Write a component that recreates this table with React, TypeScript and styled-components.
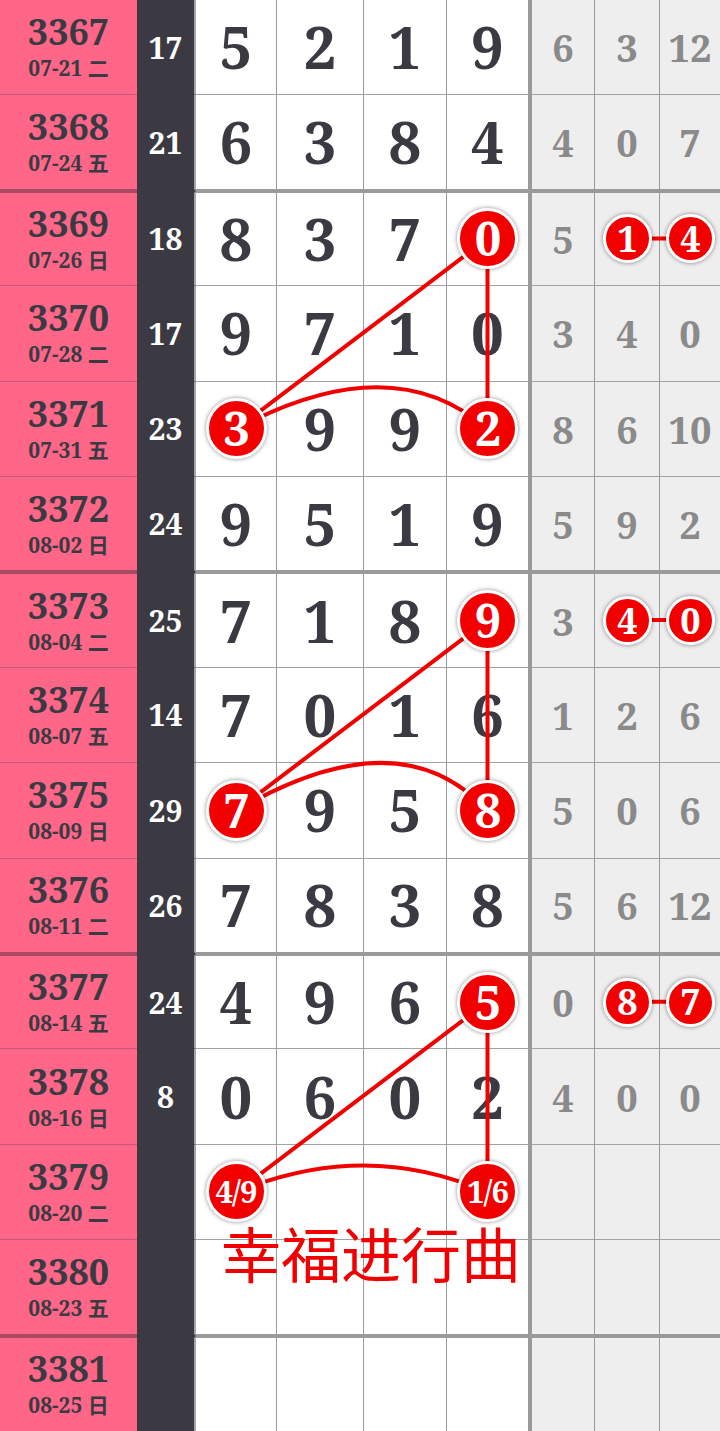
import React from 'react';
import styled, { createGlobalStyle } from 'styled-components';

const GlobalStyle = createGlobalStyle`
  html, body { margin: 0; padding: 0; background: #ffffff; }
  body { width: 720px; overflow: hidden; }
`;

const SERIF = `"Noto Serif", "DejaVu Serif", "Noto Sans CJK SC", serif`;

const PINK = '#ff6688';
const DARK = '#3b3a42';
const INK = '#3a3a42';
const LINE = '#9a9a9a';

const Table = styled.div`
  position: relative;
  width: 720px;
  height: 1431px;
  display: grid;
  grid-template-rows: repeat(15, 1fr);
  font-family: ${SERIF};
  font-weight: 700;
  font-stretch: condensed;
`;

const Row = styled.div<{ $thickTop: boolean; $thickBottom: boolean; $last: boolean }>`
  display: grid;
  grid-template-columns: 137px 59px 81px 87px 83px 81px 67px 65px 60px;
  min-height: 0;
  --bt: ${(p) => (p.$thickTop ? '2px' : '0px')};
  --bb: ${(p) => (p.$last ? '0px' : p.$thickBottom ? '2px' : '1px')};
  --pink-b: ${(p) => (p.$thickBottom ? '#a94a64' : '#c0587a')};
  --gray-b: ${(p) => (p.$thickBottom ? '#9a9a9a' : '#a2a2a2')};
`;

const CellBase = styled.div`
  box-sizing: border-box;
  min-height: 0;
  display: flex;
  align-items: center;
  justify-content: center;
  border-top: var(--bt) solid #9a9a9a;
  border-bottom: var(--bb) solid var(--gray-b);
`;

const IssueCell = styled(CellBase)`
  flex-direction: column;
  gap: 9px;
  background: ${PINK};
  color: ${INK};
  border-top-color: #a94a64;
  border-bottom-color: var(--pink-b);
  padding-bottom: 1px;
`;

const IssueNo = styled.div`
  font-size: 36px;
  line-height: 34px;
`;

const IssueDate = styled.div`
  font-size: 21px;
  line-height: 20px;
`;

const SumCell = styled(CellBase)`
  background: ${DARK};
  color: #ffffff;
  font-size: 30px;
  border-top-color: transparent;
  border-bottom-color: transparent;
  border-right: 2px solid #a6a6aa;
`;

const DigitCell = styled(CellBase)<{ $edge?: boolean }>`
  background: #ffffff;
  color: ${INK};
  font-size: 58px;
  line-height: 1;
  border-right: ${(p) => (p.$edge ? 'none' : `1px solid ${LINE}`)};
`;

const StatCell = styled(CellBase)<{ $first?: boolean; $edge?: boolean }>`
  background: #eeeeee;
  color: #8a8a8a;
  font-size: 38px;
  line-height: 1;
  border-left: ${(p) => (p.$first ? `4px solid ${LINE}` : 'none')};
  border-right: ${(p) => (p.$edge ? 'none' : `1px solid ${LINE}`)};
`;

const Ball = styled.div<{ $size: number; $font: number }>`
  position: relative;
  z-index: 2;
  box-sizing: border-box;
  width: ${(p) => p.$size}px;
  height: ${(p) => p.$size}px;
  flex: none;
  border-radius: 50%;
  background: #f20000;
  border: 3px solid #ffffff;
  box-shadow: 0 0 4px rgba(0, 0, 0, 0.45);
  display: flex;
  align-items: center;
  justify-content: center;
  color: #ffffff;
  font-size: ${(p) => p.$font}px;
  line-height: 1;
  letter-spacing: -1px;
`;

const Overlay = styled.svg`
  position: absolute;
  left: 0;
  top: 0;
  z-index: 1;
  pointer-events: none;
`;

const Title = styled.div`
  position: absolute;
  left: 221px;
  top: 1225px;
  z-index: 1;
  font-family: "Noto Sans CJK SC", sans-serif;
  font-weight: 400;
  font-size: 60px;
  line-height: 54px;
  color: #f00000;
  white-space: nowrap;
`;

type V = string | number | null;
type Item = { v: V; ball?: boolean };

type RowData = {
  issue: string;
  date: string;
  sum: string;
  digits: Item[];
  stats: Item[];
};

const d = (v: V, ball = false): Item => ({ v, ball });

const rows: RowData[] = [
  { issue: '3367', date: '07-21 二', sum: '17', digits: [d(5), d(2), d(1), d(9)], stats: [d(6), d(3), d(12)] },
  { issue: '3368', date: '07-24 五', sum: '21', digits: [d(6), d(3), d(8), d(4)], stats: [d(4), d(0), d(7)] },
  { issue: '3369', date: '07-26 日', sum: '18', digits: [d(8), d(3), d(7), d(0, true)], stats: [d(5), d(1, true), d(4, true)] },
  { issue: '3370', date: '07-28 二', sum: '17', digits: [d(9), d(7), d(1), d(0)], stats: [d(3), d(4), d(0)] },
  { issue: '3371', date: '07-31 五', sum: '23', digits: [d(3, true), d(9), d(9), d(2, true)], stats: [d(8), d(6), d(10)] },
  { issue: '3372', date: '08-02 日', sum: '24', digits: [d(9), d(5), d(1), d(9)], stats: [d(5), d(9), d(2)] },
  { issue: '3373', date: '08-04 二', sum: '25', digits: [d(7), d(1), d(8), d(9, true)], stats: [d(3), d(4, true), d(0, true)] },
  { issue: '3374', date: '08-07 五', sum: '14', digits: [d(7), d(0), d(1), d(6)], stats: [d(1), d(2), d(6)] },
  { issue: '3375', date: '08-09 日', sum: '29', digits: [d(7, true), d(9), d(5), d(8, true)], stats: [d(5), d(0), d(6)] },
  { issue: '3376', date: '08-11 二', sum: '26', digits: [d(7), d(8), d(3), d(8)], stats: [d(5), d(6), d(12)] },
  { issue: '3377', date: '08-14 五', sum: '24', digits: [d(4), d(9), d(6), d(5, true)], stats: [d(0), d(8, true), d(7, true)] },
  { issue: '3378', date: '08-16 日', sum: '8', digits: [d(0), d(6), d(0), d(2)], stats: [d(4), d(0), d(0)] },
  { issue: '3379', date: '08-20 二', sum: '', digits: [d('4/9', true), d(null), d(null), d('1/6', true)], stats: [d(null), d(null), d(null)] },
  { issue: '3380', date: '08-23 五', sum: '', digits: [d(null), d(null), d(null), d(null)], stats: [d(null), d(null), d(null)] },
  { issue: '3381', date: '08-25 日', sum: '', digits: [d(null), d(null), d(null), d(null)], stats: [d(null), d(null), d(null)] },
];

const THICK_BELOW = new Set([1, 5, 9, 13]);

const RH = 1431 / 15;
const rc = (i: number) => RH * i + RH / 2;

const XL = 236;
const XR = 487.5;
const XG2 = 627;
const XG3 = 690;

type Group = { top: number; bottom: number; rise: number; cx: number };
const groups: Group[] = [
  { top: 2, bottom: 4, rise: 84, cx: 392 },
  { top: 6, bottom: 8, rise: 96, cx: 400 },
  { top: 10, bottom: 12, rise: 54, cx: 365 },
];

const Links: React.FC = () => (
  <Overlay width={720} height={1431} viewBox="0 0 720 1431">
    {groups.map((g) => {
      const yt = rc(g.top);
      const yb = rc(g.bottom);
      return (
        <g key={g.top} stroke="#f20000" strokeWidth={4} fill="none" strokeLinecap="round">
          <line x1={XR} y1={yt} x2={XL} y2={yb} />
          <line x1={XR} y1={yt} x2={XR} y2={yb} />
          <path d={`M ${XL} ${yb} Q ${g.cx} ${yb - g.rise} ${XR} ${yb}`} />
          <line x1={XG2} y1={yt} x2={XG3} y2={yt} />
        </g>
      );
    })}
  </Overlay>
);

const renderDigit = (it: Item) => {
  if (it.v === null) return null;
  if (it.ball) {
    const s = String(it.v);
    return (
      <Ball $size={61} $font={s.length > 1 ? 31 : 47}>
        {s}
      </Ball>
    );
  }
  return it.v;
};

const renderStat = (it: Item) => {
  if (it.v === null) return null;
  if (it.ball) {
    return (
      <Ball $size={49} $font={36}>
        {it.v}
      </Ball>
    );
  }
  return it.v;
};

export default function App() {
  return (
    <>
      <GlobalStyle />
      <Table>
        {rows.map((r, i) => (
          <Row
            key={r.issue}
            $thickTop={THICK_BELOW.has(i - 1)}
            $thickBottom={THICK_BELOW.has(i)}
            $last={i === rows.length - 1}
          >
            <IssueCell>
              <IssueNo>{r.issue}</IssueNo>
              <IssueDate>{r.date}</IssueDate>
            </IssueCell>
            <SumCell>{r.sum}</SumCell>
            {r.digits.map((it, j) => (
              <DigitCell key={j} $edge={j === 3}>
                {renderDigit(it)}
              </DigitCell>
            ))}
            {r.stats.map((it, j) => (
              <StatCell key={j} $first={j === 0} $edge={j === 2}>
                {renderStat(it)}
              </StatCell>
            ))}
          </Row>
        ))}
        <Links />
        <Title>幸福进行曲</Title>
      </Table>
    </>
  );
}
